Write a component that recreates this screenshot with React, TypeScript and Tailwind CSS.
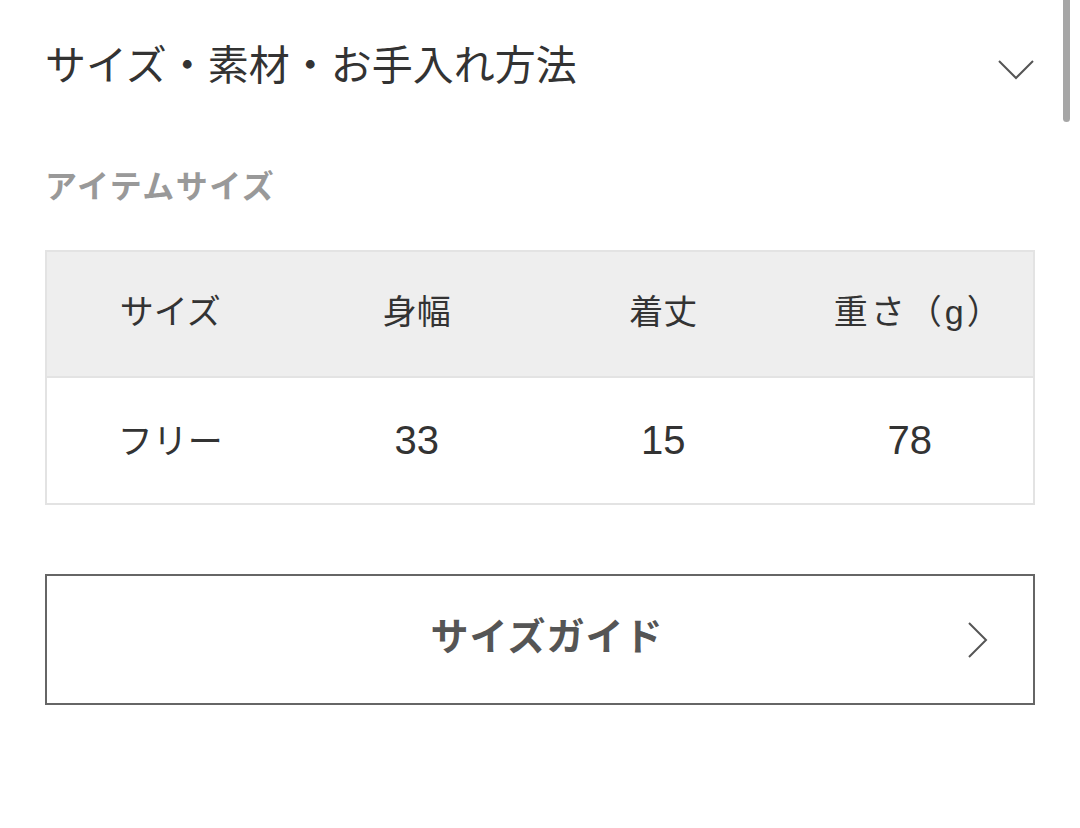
import React from "react";

const headers = [
  { h: "サイズ", cls: "" },
  { h: "身幅", cls: "" },
  { h: "着丈", cls: "" },
  { h: "重さ（g）", cls: "tracking-[3px] pl-[18px]" },
];
const values = [
  { v: "フリー", cls: "text-[35px] pt-[6px]" },
  { v: "33", cls: "text-[40px]" },
  { v: "15", cls: "text-[40px]" },
  { v: "78", cls: "text-[40px]" },
];

const ChevronDown = () => (
  <svg width="38" height="22" viewBox="0 0 38 22" fill="none">
    <path d="M2 2 L19 19 L36 2" stroke="#555" strokeWidth="2" />
  </svg>
);

const ChevronRight = () => (
  <svg width="22" height="38" viewBox="0 0 22 38" fill="none">
    <path d="M2 2 L19 19 L2 36" stroke="#555" strokeWidth="2" />
  </svg>
);

export default function App() {
  return (
    <div
      className="relative w-[1080px] h-[828px] bg-white overflow-hidden"
      style={{ fontFamily: '"Liberation Sans", "Noto Sans CJK JP", sans-serif' }}
    >
      {/* scrollbar */}
      <div className="absolute right-[10px] top-[-6px] w-[7px] h-[128px] rounded-full bg-[#a6a6a6]" />

      <div className="px-[45px]">
        {/* Section header */}
        <div className="h-[140px] pb-[8px] flex items-center justify-between">
          <h2 className="text-[41px] leading-none text-[#333] font-normal">
            サイズ・素材・お手入れ方法
          </h2>
          <span className="pt-[8px]">
            <ChevronDown />
          </span>
        </div>

        <div className="mt-[23px] h-[48px] flex items-center text-[32px] font-bold text-[#999] tracking-[1.5px]">
          アイテムサイズ
        </div>

        {/* Size table */}
        <div className="mt-[39px] border-2 border-[#e3e3e3]">
          <div className="grid grid-cols-4 h-[126px] pb-[4px] bg-[#eeeeee] border-b-2 border-[#e3e3e3]">
            {headers.map(({ h, cls }) => (
              <div key={h} className={`flex items-center justify-center text-[34px] text-[#333] ${cls}`}>
                {h}
              </div>
            ))}
          </div>
          <div className="grid grid-cols-4 h-[125px] pb-[2px] bg-white">
            {values.map(({ v, cls }) => (
              <div key={v} className={`flex items-center justify-center text-[#333] ${cls}`}>
                {v}
              </div>
            ))}
          </div>
        </div>

        {/* Size guide button */}
        <button className="mt-[69px] w-full h-[131px] pb-[4px] border-2 border-[#666] flex items-center relative">
          <span className="flex-1 pl-[14px] text-center text-[38px] font-bold text-[#555] tracking-[1px]">
            サイズガイド
          </span>
          <span className="absolute right-[44px] top-1/2 -translate-y-1/2">
            <ChevronRight />
          </span>
        </button>
      </div>
    </div>
  );
}
